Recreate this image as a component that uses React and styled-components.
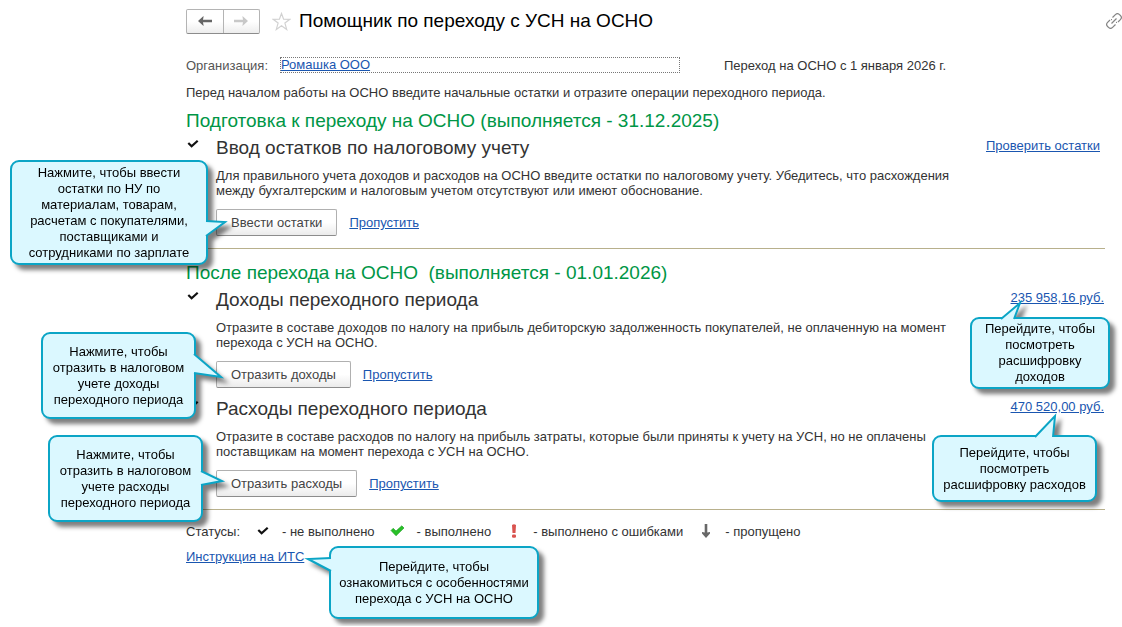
import React from "react";
import styled, { createGlobalStyle } from "styled-components";

const GlobalStyle = createGlobalStyle`
  * { box-sizing: border-box; }
  body {
    margin: 0;
    background: #fff;
    color: #333;
    font: 13px/15px "Liberation Sans", Arial, sans-serif;
  }
  h1, h2, h3, p { margin: 0; font-weight: normal; }
`;

const Page = styled.div`
  min-width: 960px;
  overflow: hidden;
  padding-bottom: 62px;
`;

const Header = styled.header`
  display: flex;
  align-items: center;
  height: 42px;
  padding-left: 186px;
`;

const History = styled.div`
  display: flex;
  width: 74px;
  height: 25px;
  border: 1px solid #b4b4b4;
  border-bottom-color: #8c8c8c;
  border-radius: 2px;
  background: linear-gradient(#fff 50%, #ededed);
`;

const HistoryButton = styled.button`
  flex: 1;
  display: grid;
  place-items: center;
  padding: 0;
  border: 0;
  background: none;
  color: #666;

  & + & { border-left: 1px solid #b4b4b4; }
  &:disabled { color: #c8c8c8; }
`;

const IconButton = styled.button`
  display: grid;
  place-items: center;
  padding: 0;
  border: 0;
  background: none;
`;

const StarButton = styled(IconButton)`
  margin: 0 8px 0 12px;
`;

const Title = styled.h1`
  flex: 1;
  color: #000;
  font-size: 19px;
  line-height: 24px;
`;

const Main = styled.main`
  padding: 15px 17px 0 186px;
`;

const Link = styled.a`
  color: #1a56b0;
  text-decoration: underline;
  text-underline-offset: 1px;
`;

const OrgRow = styled.div`
  display: flex;
  align-items: center;
  height: 16px;
`;

const OrgLabel = styled.span`
  width: 94px;
  color: #555;
`;

const OrgField = styled.div`
  width: 400px;
  height: 16px;
  margin-right: 44px;
  border: 1px dotted #777;
  line-height: 14px;
`;

const Intro = styled.p`
  margin-top: 12px;
`;

const Stage = styled.section`
  padding: ${(p) => (p.$first ? 9 : 12)}px 0 12px;
  border-bottom: 1px solid #b8b08c;
`;

const StageTitle = styled.h2`
  color: #009646;
  font-size: 19px;
  line-height: 24px;
  white-space: pre-wrap;
`;

const StepGrid = styled.div`
  display: grid;
  grid-template-columns: 30px 1fr auto;
  padding-top: 4px;

  & + & { padding-top: 10px; }
`;

const StepState = styled.div`
  padding-left: 1px;
`;

const StepTitle = styled.h3`
  font-size: 19px;
  line-height: 22px;
`;

const StepText = styled.p`
  max-width: 770px;
  margin: 9px 0 11px;
`;

const Actions = styled.div`
  display: flex;
  align-items: center;
  gap: 12px;
`;

const Anchor = styled.div`
  position: relative;
`;

const StepResult = styled(Anchor)`
  height: 15px;
  margin-top: 1px;
  padding-right: ${(p) => (p.$inset ? 5 : 1)}px;
`;

const ActionButton = styled.button`
  height: 27px;
  padding: 0 14px;
  border: 1px solid #b0b0b0;
  border-bottom-color: #8c8c8c;
  border-radius: 2px;
  background: linear-gradient(#fff 50%, #ebebeb);
  color: #444;
  font: inherit;
`;

const Legend = styled.div`
  display: flex;
  align-items: center;
  height: 16px;
  margin-top: 13px;
`;

const LegendLabel = styled.span`
  width: 69px;
`;

const LegendItem = styled.span`
  display: flex;
  align-items: center;
  gap: 11px;
  margin-right: 15px;
`;

const LegendIcon = styled.span`
  display: grid;
  place-items: center;
  width: 16px;
`;

const Footer = styled(Anchor)`
  width: max-content;
  margin-top: 10px;
`;

const Bubble = styled.div`
  position: absolute;
  z-index: 1;
  top: ${(p) => p.$top}px;
  ${(p) => (p.$right !== undefined ? `right: ${p.$right}px;` : `left: ${p.$left}px;`)}
  display: grid;
  place-items: center;
  width: ${(p) => p.$width}px;
  height: ${(p) => p.$height}px;
  border: 2px solid #0ba5c6;
  border-radius: 9px;
  background: #dbf8ff;
  color: #000;
  line-height: 16px;
  text-align: center;
  white-space: pre;
  filter: drop-shadow(5px 5px 2px rgba(0, 0, 0, 0.5));
`;

const Tail = styled.svg`
  position: absolute;
  top: -2px;
  left: -2px;
  width: 1px;
  height: 1px;
  overflow: visible;
  fill: #dbf8ff;
  stroke: #0ba5c6;
  stroke-width: 2;
`;

function Callout({ text, tail, top, left, right, width, height }) {
  return (
    <Bubble role="note" $top={top} $left={left} $right={right} $width={width} $height={height}>
      <Tail aria-hidden="true"><path d={tail} /></Tail>
      {text}
    </Bubble>
  );
}

const Arrow = ({ back }) => (
  <svg width="14" height="10" viewBox="0 0 14 10" fill="currentColor" aria-hidden="true">
    <path d={back ? "M0 5L5.500 0v1L5 3.800h9v2.400H5L5.500 9v1z" : "M14 5L8.500 0v1L9 3.800H0v2.400h9L8.500 9v1z"} />
  </svg>
);

const Star = () => (
  <svg width="19" height="19" viewBox="0 0 19 19" aria-hidden="true">
    <path d="M9.500 1.500l2.100 5.700 6.200.1-4.900 3.800 1.800 6.300-5.200-3.700-5.200 3.700 1.800-6.300L1.200 7.300l6.200-.1z" fill="#fff" stroke="#d2d2d2" strokeWidth="1.200" />
  </svg>
);

const Chain = () => (
  <svg width="16" height="16" viewBox="0 0 16 16" fill="none" stroke="#858585" strokeWidth="1.200" aria-hidden="true">
    <path d="M5.500 10.500l5-5M6.500 4.500l2.900-2.900a2.900 2.900 0 0 1 4.100 0l.9.900a2.900 2.900 0 0 1 0 4.100L12 9M9.500 11.500l-2.900 2.900a2.900 2.900 0 0 1-4.100 0l-.9-.9a2.900 2.900 0 0 1 0-4.100L4 7M10 9.500l1-.2M6 6.500l-1 .2" />
  </svg>
);

const Check = () => (
  <svg width="12" height="10" viewBox="0 0 12 10" aria-hidden="true">
    <path d="M1.300 4L4.600 7.300 10.700 1.700" fill="none" stroke="#111" strokeWidth="2.200" />
  </svg>
);

const Done = () => (
  <svg width="15" height="12" viewBox="0 0 15 12" aria-hidden="true">
    <path d="M1 5.500L3.200 3.300 6 6 11.800.8 14 3 6 10.800z" fill="#28c028" stroke="#179a1c" strokeWidth=".6" />
  </svg>
);

const Failed = () => (
  <svg width="6" height="14" viewBox="0 0 6 14" fill="#d9534f" aria-hidden="true">
    <path d="M1 1Q3-.6 5 1L4.500 9h-3z" />
    <rect x="1" y="10.500" width="4" height="3.200" rx="1.200" />
  </svg>
);

const Skipped = () => (
  <svg width="10" height="14" viewBox="0 0 10 14" fill="#686868" aria-hidden="true">
    <path d="M3.700 0h2.600v8.500L9 8v1.500L5 14 1 9.500V8l2.700.5z" />
  </svg>
);

function Step({ title, text, action, result, inset, actionNote, resultNote }) {
  return (
    <StepGrid>
      <StepState><Check /></StepState>
      <div>
        <StepTitle>{title}</StepTitle>
        <StepText>{text}</StepText>
        <Actions>
          <Anchor>
            <ActionButton type="button">{action}</ActionButton>
            <Callout {...actionNote} />
          </Anchor>
          <Link href="#skip">Пропустить</Link>
        </Actions>
      </div>
      <StepResult $inset={inset}>
        <Link href="#result">{result}</Link>
        {resultNote && <Callout {...resultNote} />}
      </StepResult>
    </StepGrid>
  );
}

const STATUSES = [
  [Check, "- не выполнено"],
  [Done, "- выполнено"],
  [Failed, "- выполнено с ошибками"],
  [Skipped, "- пропущено"],
];

export default function App() {
  return (
    <Page>
      <GlobalStyle />
      <Header>
        <History>
          <HistoryButton type="button" aria-label="Назад"><Arrow back /></HistoryButton>
          <HistoryButton type="button" aria-label="Вперед" disabled><Arrow /></HistoryButton>
        </History>
        <StarButton type="button" aria-label="В избранное"><Star /></StarButton>
        <Title>Помощник по переходу с УСН на ОСНО</Title>
        <IconButton type="button" aria-label="Ссылка"><Chain /></IconButton>
      </Header>
      <Main>
        <OrgRow>
          <OrgLabel>Организация:</OrgLabel>
          <OrgField><Link href="#organization">Ромашка ООО</Link></OrgField>
          <span>Переход на ОСНО с 1 января 2026 г.</span>
        </OrgRow>
        <Intro>Перед началом работы на ОСНО введите начальные остатки и отразите операции переходного периода.</Intro>

        <Stage $first>
          <StageTitle>Подготовка к переходу на ОСНО (выполняется - 31.12.2025)</StageTitle>
          <Step
            title="Ввод остатков по налоговому учету"
            text="Для правильного учета доходов и расходов на ОСНО введите остатки по налоговому учету. Убедитесь, что расхождения между бухгалтерским и налоговым учетом отсутствуют или имеют обоснование."
            action="Ввести остатки"
            result="Проверить остатки"
            inset
            actionNote={{
              text: "Нажмите, чтобы ввести\nостатки по НУ по\nматериалам, товарам,\nрасчетам с покупателями,\nпоставщиками и\nсотрудниками по зарплате",
              top: -49, left: -206, width: 198, height: 105,
              tail: "M196 61L215 62L196 76",
            }}
          />
        </Stage>

        <Stage>
          <StageTitle>{"После перехода на ОСНО  (выполняется - 01.01.2026)"}</StageTitle>
          <Step
            title="Доходы переходного периода"
            text="Отразите в составе доходов по налогу на прибыль дебиторскую задолженность покупателей, не оплаченную на момент перехода с УСН на ОСНО."
            action="Отразить доходы"
            result="235 958,16 руб."
            actionNote={{
              text: "Нажмите, чтобы\nотразить в налоговом\nучете доходы\nпереходного периода",
              top: -29, left: -175, width: 155, height: 87,
              tail: "M153 22L180 45L153 41",
            }}
            resultNote={{
              text: "Перейдите, чтобы\nпосмотреть\nрасшифровку\nдоходов",
              top: 27, right: -5, width: 140, height: 72,
              tail: "M31 2L50 -14L44 2",
            }}
          />
          <Step
            title="Расходы переходного периода"
            text="Отразите в составе расходов по налогу на прибыль затраты, которые были приняты к учету на УСН, но не оплачены поставщикам на момент перехода с УСН на ОСНО."
            action="Отразить расходы"
            result="470 520,00 руб."
            actionNote={{
              text: "Нажмите, чтобы\nотразить в налоговом\nучете расходы\nпереходного периода",
              top: -35, left: -168, width: 155, height: 87,
              tail: "M153 36L174 46L153 50",
            }}
            resultNote={{
              text: "Перейдите, чтобы\nпосмотреть\nрасшифровку расходов",
              top: 36, right: 8, width: 165, height: 67,
              tail: "M103 2L123 -19L121 2",
            }}
          />
        </Stage>

        <Legend>
          <LegendLabel>Статусы:</LegendLabel>
          {STATUSES.map(([Icon, label]) => (
            <LegendItem key={label}>
              <LegendIcon><Icon /></LegendIcon>
              {label}
            </LegendItem>
          ))}
        </Legend>
        <Footer>
          <Link href="#its">Инструкция на ИТС</Link>
          <Callout
            text={"Перейдите, чтобы\nознакомиться с особенностями\nперехода с УСН на ОСНО"}
            top={-3} left={143} width={210} height={73}
            tail="M2 12L-21 13L2 25"
          />
        </Footer>
      </Main>
    </Page>
  );
}
